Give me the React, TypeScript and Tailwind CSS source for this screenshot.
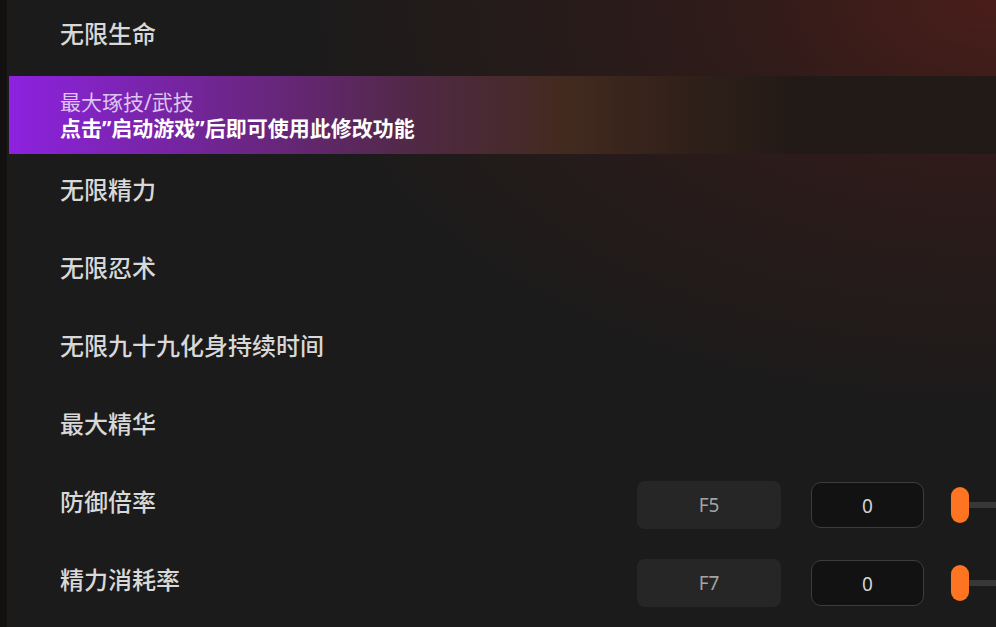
import { Fragment } from 'react'

type Item = {
  label: string
  hotkey?: string
  value?: string
  active?: boolean
}

const items: Item[] = [
  { label: '无限生命' },
  { label: '最大琢技/武技', active: true },
  { label: '无限精力' },
  { label: '无限忍术' },
  { label: '无限九十九化身持续时间' },
  { label: '最大精华' },
  { label: '防御倍率', hotkey: 'F5', value: '0' },
  { label: '精力消耗率', hotkey: 'F7', value: '0' },
]

function Controls({ hotkey, value }: { hotkey: string; value: string }) {
  return (
    <div className="ml-auto flex items-center">
      <div className="flex h-[48px] w-[144px] items-center justify-center rounded-[8px] bg-[#262626] font-['Noto_Sans',sans-serif] text-[19px] text-[#a3a3a3]">
        {hotkey}
      </div>
      <div className="ml-[30px] flex h-[46px] w-[113px] items-center justify-center rounded-[10px] border border-[#3d3d3d] bg-[#121212] pt-[3px] font-['Noto_Sans',sans-serif] text-[19px] text-[#d4d4d4]">
        {value}
      </div>
      <div className="ml-[27px] flex w-[45px] items-center">
        <div className="h-[36px] w-[18px] shrink-0 rounded-full bg-[#ff7420]" />
        <div className="h-[6px] flex-1 bg-[#383838]" />
      </div>
    </div>
  )
}

export default function App() {
  return (
    <div className="flex h-[627px] w-[996px] overflow-hidden bg-[#1c1b1b] font-['Noto_Sans_CJK_SC',sans-serif]">
      <div className="w-[7px] shrink-0 bg-[#121110]" />
      <div className="flex-1 bg-[radial-gradient(ellipse_70%_65%_at_100%_0%,rgba(74,30,26,1)_0%,rgba(54,27,25,0.7)_40%,rgba(28,27,27,0)_100%)] pl-[2px]">
        <div className="-mt-[2px] flex flex-col">
          {items.map((item) => (
            <Fragment key={item.label}>
              {item.active ? (
                <div className="flex h-[78px] flex-col justify-center bg-[linear-gradient(to_right,#8d22e0_0%,#6a2682_25%,#4f2942_42%,#432a1f_56%,#2e1f19_70%,#221a16_80%,#221a16_100%)] pl-[51px] font-['Noto_Sans','Noto_Sans_CJK_SC',sans-serif]">
                  <p className="text-[21px] leading-[26px] text-[#dcc5f0]">{item.label}</p>
                  <p className="text-[21px] font-bold leading-[27px] text-white">点击”启动游戏”后即可使用此修改功能</p>
                </div>
              ) : (
                <div className="flex h-[78px] items-center pl-[51px]">
                  <span className="mb-[8px] text-[24px] font-medium text-[#d8d8d8]">{item.label}</span>
                  {item.hotkey && item.value && <Controls hotkey={item.hotkey} value={item.value} />}
                </div>
              )}
            </Fragment>
          ))}
        </div>
      </div>
    </div>
  )
}
